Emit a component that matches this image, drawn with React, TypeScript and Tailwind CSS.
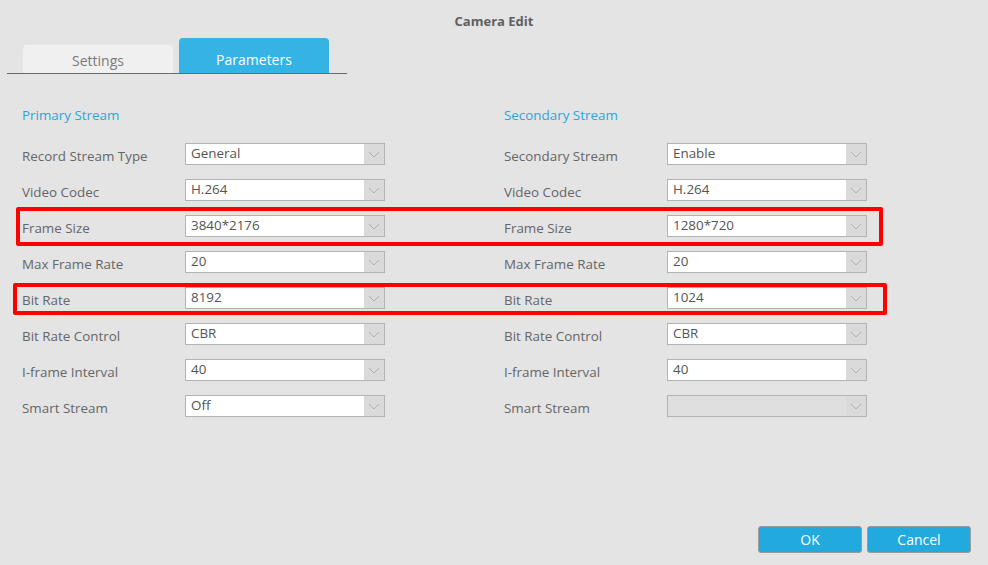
import React from "react";

interface Field {
  label: string;
  value: string;
  disabled?: boolean;
}

const primary: Field[] = [
  { label: "Record Stream Type", value: "General" },
  { label: "Video Codec", value: "H.264" },
  { label: "Frame Size", value: "3840*2176" },
  { label: "Max Frame Rate", value: "20" },
  { label: "Bit Rate", value: "8192" },
  { label: "Bit Rate Control", value: "CBR" },
  { label: "I-frame Interval", value: "40" },
  { label: "Smart Stream", value: "Off" },
];

const secondary: Field[] = [
  { label: "Secondary Stream", value: "Enable" },
  { label: "Video Codec", value: "H.264" },
  { label: "Frame Size", value: "1280*720" },
  { label: "Max Frame Rate", value: "20" },
  { label: "Bit Rate", value: "1024" },
  { label: "Bit Rate Control", value: "CBR" },
  { label: "I-frame Interval", value: "40" },
  { label: "Smart Stream", value: "", disabled: true },
];

const Chevron = () => (
  <svg width="12" height="7" viewBox="0 0 12 7" fill="none">
    <path d="M1 1l5 5 5-5" stroke="#b0b0b0" strokeWidth="1" />
  </svg>
);

const Select = ({ value, disabled }: { value: string; disabled?: boolean }) => (
  <div
    className={
      "mt-[4px] flex h-[22px] w-[200px] border border-[#b3b3b3] " +
      (disabled ? "bg-[#dfdfdf]" : "bg-white")
    }
  >
    <div className="flex-1 pl-[5px] text-[13.4px] leading-[19px] text-[#555]">{value}</div>
    <div className="flex w-[20px] items-center justify-center bg-[#dadada]">
      <Chevron />
    </div>
  </div>
);

const Column = ({ title, fields }: { title: string; fields: Field[] }) => (
  <div className="w-[363px]">
    <div className="h-[65px] pt-[31px] text-[13.4px] leading-[20px] text-[#2aa4dc]">{title}</div>
    {fields.map((f, i) => (
      <div key={i} className="flex h-[36px] items-start">
        <div className="mt-[7px] w-[163px] text-[13.4px] leading-[20px] text-[#666]">{f.label}</div>
        <Select value={f.value} disabled={f.disabled} />
      </div>
    ))}
  </div>
);

export default function App() {
  return (
    <div
      className="relative flex h-[565px] w-[988px] flex-col bg-[#e4e4e4]"
      style={{ fontFamily: '"Open Sans", "Noto Sans", sans-serif' }}
    >
      <div className="flex h-[39px] items-center justify-center pt-[5px] text-[13px] font-bold text-[#5f5f5f]">
        Camera Edit
      </div>

      <div className="ml-[7px] flex h-[35px] w-[340px] items-end border-b border-[#6a6a6a]">
        <div className="ml-[16px] flex h-[28px] w-[150px] items-center justify-center rounded-t-[4px] bg-[#f0f0f0] pt-[3px] text-[14px] text-[#7a7a7a]">
          Settings
        </div>
        <div className="ml-[6px] flex h-[35px] w-[150px] items-center justify-center rounded-t-[4px] bg-[#35b3e5] pt-[7px] text-[14px] text-white">
          Parameters
        </div>
      </div>

      <div className="flex pl-[22px]">
        <Column title="Primary Stream" fields={primary} />
        <div className="w-[119px]" />
        <Column title="Secondary Stream" fields={secondary} />
      </div>

      <div className="mt-auto flex justify-end gap-[5px] pb-[12px] pr-[17px]">
        <button className="h-[27px] w-[104px] rounded-[3px] border border-[#9a9a9a] bg-[#22a9de] text-[14px] text-white">
          OK
        </button>
        <button className="h-[27px] w-[104px] rounded-[3px] border border-[#9a9a9a] bg-[#22a9de] text-[14px] text-white">
          Cancel
        </button>
      </div>

      {/* annotation boxes */}
      <div className="pointer-events-none absolute left-[16px] top-[207px] h-[39px] w-[867px] rounded-[2px] border-4 border-[#ff0000]" />
      <div className="pointer-events-none absolute left-[13px] top-[283px] h-[32px] w-[874px] rounded-[2px] border-4 border-[#ff0000]" />
    </div>
  );
}
